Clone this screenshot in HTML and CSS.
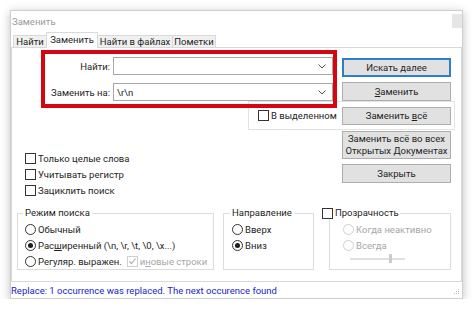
FILE: index.html
```html
<!DOCTYPE html>
<html lang="ru">
<head>
    <meta charset="UTF-8">
    <title>Заменить</title>
    <link rel="stylesheet" href="styles.css">
</head>
<body>
    <div class="window">
        <div class="titlebar">
            <span class="title">Заменить</span>
            <span class="close"></span>
        </div>
        <div class="tabs">
            <div class="tab t1">Найти</div>
            <div class="tab t2 active">Заменить</div>
            <div class="tab t3">Найти в файлах</div>
            <div class="tab t4">Пометки</div>
        </div>
        <div class="panel">
            <div class="top">
                <div class="left">
                    <div class="highlight">
                        <div class="field">
                            <label>Найти:</label>
                            <div class="combo"><span></span><svg width="8" height="5" viewBox="0 0 8 5"><path d="M0.5 0.5 L4 4 L7.5 0.5" fill="none" stroke="#555" stroke-width="1"/></svg></div>
                        </div>
                        <div class="field">
                            <label>Заменить на:</label>
                            <div class="combo"><span>\r\n</span><svg width="8" height="5" viewBox="0 0 8 5"><path d="M0.5 0.5 L4 4 L7.5 0.5" fill="none" stroke="#555" stroke-width="1"/></svg></div>
                        </div>
                    </div>
                    <div class="options">
                        <div class="check"><span class="box"></span>Только целые слова</div>
                        <div class="check"><span class="box"></span>Учитывать регистр</div>
                        <div class="check"><span class="box"></span>Зациклить поиск</div>
                    </div>
                </div>
                <div class="actions">
                    <button class="btn focused">Искать далее</button>
                    <button class="btn"><u>З</u>аменить</button>
                    <div class="scope">
                        <div class="check"><span class="box"></span>В выделенном</div>
                        <button class="btn small">Заменить <u>в</u>сё</button>
                    </div>
                    <button class="btn tall">Заменить всё во всех<br>Открытых Документах</button>
                    <button class="btn">Закрыть</button>
                </div>
            </div>
            <div class="groups">
                <fieldset class="group mode">
                    <legend>Режим поиска</legend>
                    <div class="radio"><span class="dot"></span>Обычный</div>
                    <div class="radio on"><span class="dot"></span>Рас<u>ш</u>иренный (\n, \r, \t, \0, \x...)</div>
                    <div class="radio">
                        <span class="dot"></span>Регуляр. выражен.
                        <span class="check disabled"><span class="box"><svg width="9" height="9" viewBox="0 0 9 9"><path d="M1.5 4.5 L3.5 6.5 L7.5 1.5" fill="none" stroke="#b0b0b0" stroke-width="1.2"/></svg></span>и <u>н</u>овые строки</span>
                    </div>
                </fieldset>
                <fieldset class="group direction">
                    <legend>Направление</legend>
                    <div class="radio"><span class="dot"></span>Вверх</div>
                    <div class="radio on"><span class="dot"></span>Вниз</div>
                </fieldset>
                <fieldset class="group opacity">
                    <legend><span class="check"><span class="box"></span>Прозрачность</span></legend>
                    <div class="radio disabled"><span class="dot"></span>Когда неактивно</div>
                    <div class="radio disabled"><span class="dot"></span>Всегда</div>
                    <div class="slider"><span class="thumb"></span></div>
                </fieldset>
            </div>
        </div>
        <div class="status">
            <span>Replace: 1 occurrence was replaced. The next occurence found</span>
            <svg class="grip" width="6" height="6" viewBox="0 0 6 6">
                <rect x="4" y="0" width="1" height="1" fill="#bbb"/>
                <rect x="2" y="2" width="1" height="1" fill="#bbb"/>
                <rect x="4" y="2" width="1" height="1" fill="#bbb"/>
                <rect x="0" y="4" width="1" height="1" fill="#bbb"/>
                <rect x="2" y="4" width="1" height="1" fill="#bbb"/>
                <rect x="4" y="4" width="1" height="1" fill="#bbb"/>
            </svg>
        </div>
    </div>
</body>
</html>
```

FILE: styles.css
```css
body {
    margin: 0;
    background-color: #ffffff;
    font-family: Roboto, "Noto Sans", sans-serif;
    font-size: 9.5px;
    color: #1e1e1e;
}

.window {
    box-sizing: border-box;
    margin: 10px 0 0 10px;
    width: 453px;
    height: 289px;
    border: 1px solid #cfcfcf;
    background-color: #ffffff;
    box-shadow: 0 2px 9px rgba(0,0,0,0.25);
    display: flex;
    flex-direction: column;
}

.titlebar {
    height: 21px;
    display: flex;
    align-items: center;
    justify-content: space-between;
    padding-left: 1px;
}

.title {
    color: #9a9a9a;
}

.close {
    width: 10px;
    height: 14px;
    background-color: #e6e6e6;
    margin-top: -1px;
}

.tabs {
    height: 15px;
    display: flex;
    align-items: flex-end;
    padding-left: 2px;
    position: relative;
    z-index: 1;
}

.tab {
    box-sizing: border-box;
    height: 12px;
    line-height: 11px;
    text-align: center;
    white-space: nowrap;
    border: 1px solid #d9d9d9;
    border-bottom: none;
    background-color: #f0f0f0;
    margin-right: -1px;
}

.tab.active {
    height: 16px;
    margin-bottom: -1px;
    line-height: 13px;
    background-color: #ffffff;
}

.t1 { width: 34px; }
.t2 { width: 52px; }
.t3 { width: 76px; }
.t4 { width: 44px; }

.panel {
    height: 231px;
    border: 1px solid #d9d9d9;
    display: flex;
    flex-direction: column;
    padding: 2px 0 0 5px;
}

.top {
    display: flex;
    padding-left: 8px;
}

.left {
    width: 312px;
}

.highlight {
    position: relative;
    z-index: 1;
    box-sizing: border-box;
    margin-left: 16px;
    width: 296px;
    height: 58px;
    border: 4px solid #d40612;
    padding-top: 3px;
    display: flex;
    flex-direction: column;
    gap: 8px;
}

.field {
    display: flex;
    align-items: center;
}

.field label {
    width: 65px;
    padding-right: 3px;
    text-align: right;
}

.combo {
    box-sizing: border-box;
    flex: 1;
    height: 18px;
    border: 1px solid #a8a8a8;
    background-color: #ffffff;
    display: flex;
    align-items: center;
    justify-content: space-between;
    padding: 0 6px 0 3px;
}

.options {
    margin-top: 42px;
}

.check, .radio {
    height: 16px;
    display: flex;
    align-items: center;
    white-space: nowrap;
}

.box {
    box-sizing: border-box;
    flex-shrink: 0;
    width: 11px;
    height: 11px;
    border: 1px solid #333333;
    background-color: #ffffff;
    margin-right: 2px;
    display: flex;
    align-items: center;
    justify-content: center;
}

.actions {
    width: 109px;
    margin-left: 5px;
    padding-top: 8px;
    display: flex;
    flex-direction: column;
}

.btn {
    box-sizing: border-box;
    height: 19px;
    padding: 0;
    border: 1px solid #adadad;
    background-color: #e1e1e1;
    font-family: inherit;
    font-size: 9.5px;
    color: #1e1e1e;
    white-space: nowrap;
    margin-bottom: 5px;
}

.btn.focused {
    border-color: #2f7fc4;
    box-shadow: inset 0 0 0 1px #2f7fc4;
}

.btn.small {
    width: 109px;
    height: 18px;
    margin: 0;
}

.btn.tall {
    height: 28px;
    line-height: 12px;
}

.scope {
    box-sizing: border-box;
    margin: -5px 0 1px -94px;
    width: 207px;
    height: 29px;
    border: 1px solid #e3e3e3;
    display: flex;
    align-items: center;
    justify-content: space-between;
    padding: 0 3px 0 9px;
}

.groups {
    display: flex;
    margin-top: 9px;
}

.group {
    box-sizing: border-box;
    margin: 0;
    padding: 0 0 0 7px;
    height: 63px;
    border: 1px solid #dcdcdc;
    min-width: 0;
}

.group legend {
    padding: 0 2px;
    margin-left: -2px;
    line-height: 12px;
}

.group .radio:first-of-type {
    margin-top: 2px;
}

.mode {
    width: 197px;
}

.direction {
    width: 91px;
    margin-left: 9px;
    padding-left: 8px;
}

.opacity {
    width: 122px;
    margin-left: 15px;
    padding-left: 13px;
}

.opacity legend {
    margin-left: -21px;
    padding: 0 1px 0 0;
}

.opacity legend .check {
    height: 12px;
}

.dot {
    box-sizing: border-box;
    flex-shrink: 0;
    width: 11px;
    height: 11px;
    border: 1px solid #333333;
    border-radius: 50%;
    margin-right: 2px;
    display: flex;
    align-items: center;
    justify-content: center;
}

.radio.on .dot::after {
    content: "";
    width: 5px;
    height: 5px;
    border-radius: 50%;
    background-color: #1e1e1e;
}

.disabled {
    color: #a6a6a6;
}

.disabled .dot, .disabled .box {
    border-color: #cfcfcf;
}

.radio .check {
    margin-left: 5px;
}

.slider {
    margin: 5px 0 0 7px;
    width: 55px;
    height: 2px;
    background-color: #e0e0e0;
    position: relative;
}

.thumb {
    position: absolute;
    left: 39px;
    top: -4px;
    width: 3px;
    height: 9px;
    background-color: #cccccc;
}

.status {
    flex: 1;
    display: flex;
    align-items: center;
    justify-content: space-between;
    padding: 0 2px 0 0;
    color: #2222cc;
}

.grip {
    align-self: flex-end;
    margin-bottom: 3px;
}
```
